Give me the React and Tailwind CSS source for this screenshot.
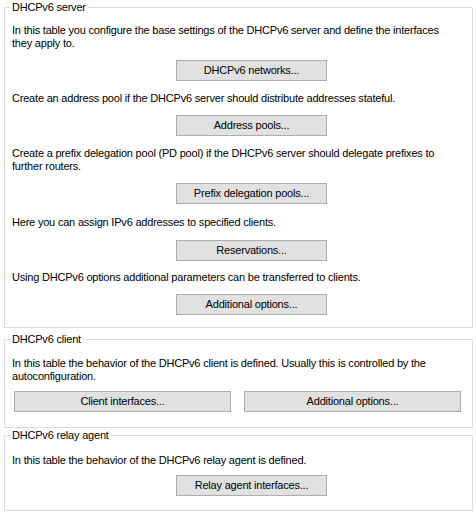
const Button = ({ children, className = '' }) => (
  <button
    className={`h-[21px] border border-[#adadad] bg-[#e1e1e1] text-black leading-[19px] ${className}`}
  >
    {children}
  </button>
);

const Group = ({ title, className = '', children }) => (
  <fieldset className={`ml-[4px] w-[469px] border border-[#dcdcdc] pl-[5px] ${className}`}>
    <legend className="px-[2px] leading-[13px]">{title}</legend>
    {children}
  </fieldset>
);

export default function App() {
  return (
    <div
      className="w-[476px] h-[513px] bg-white text-black text-[11px] tracking-[-0.2px] leading-[13px] pt-[1px]"
      style={{ fontFamily: '"Liberation Sans", Arial, sans-serif' }}
    >
      <Group title="DHCPv6 server" className="pb-[12px]">
        <div className="pl-[2px] flex flex-col">
          <p className="mt-[10px] whitespace-nowrap">
            In this table you configure the base settings of the DHCPv6 server and define the interfaces
            <br />
            they apply to.
          </p>
          <Button className="mt-[10px] ml-[164px] w-[151px]">DHCPv6 networks...</Button>
          <p className="mt-[11px] whitespace-nowrap">Create an address pool if the DHCPv6 server should distribute addresses stateful.</p>
          <Button className="mt-[10px] ml-[164px] w-[151px]">Address pools...</Button>
          <p className="mt-[11px] whitespace-nowrap">
            Create a prefix delegation pool (PD pool) if the DHCPv6 server should delegate prefixes to
            <br />
            further routers.
          </p>
          <Button className="mt-[10px] ml-[164px] w-[151px]">Prefix delegation pools...</Button>
          <p className="mt-[12px] whitespace-nowrap">Here you can assign IPv6 addresses to specified clients.</p>
          <Button className="mt-[11px] ml-[164px] w-[151px]">Reservations...</Button>
          <p className="mt-[10px] whitespace-nowrap">Using DHCPv6 options additional parameters can be transferred to clients.</p>
          <Button className="mt-[10px] ml-[164px] w-[151px]">Additional options...</Button>
        </div>
      </Group>

      <Group title="DHCPv6 client" className="mt-[5px] pb-[15px]">
        <div className="pl-[2px] flex flex-col">
          <p className="mt-[11px] whitespace-nowrap">
            In this table the behavior of the DHCPv6 client is defined. Usually this is controlled by the
            <br />
            autoconfiguration.
          </p>
          <div className="mt-[8px] ml-[2px] flex gap-[13px]">
            <Button className="w-[217px]">Client interfaces...</Button>
            <Button className="w-[217px]">Additional options...</Button>
          </div>
        </div>
      </Group>

      <Group title="DHCPv6 relay agent" className="mt-[1px] pb-[14px]">
        <div className="pl-[2px] flex flex-col">
          <p className="mt-[12px] whitespace-nowrap">In this table the behavior of the DHCPv6 relay agent is defined.</p>
          <Button className="mt-[8px] ml-[164px] w-[151px]">Relay agent interfaces...</Button>
        </div>
      </Group>
    </div>
  );
}
